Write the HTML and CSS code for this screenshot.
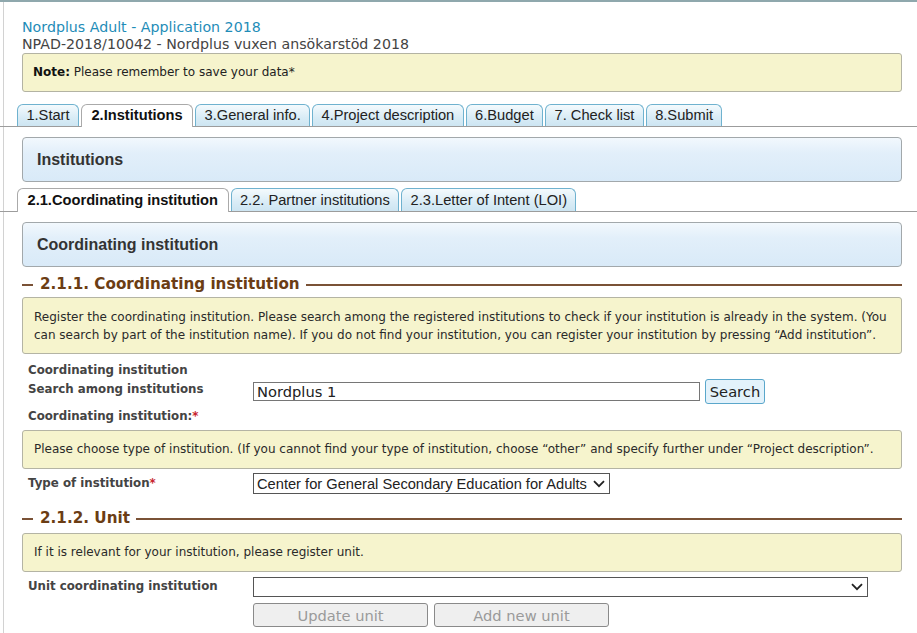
FILE: index.html
```html
<!DOCTYPE html>
<html lang="en">
<head>
<meta charset="utf-8">
<title>Nordplus Adult - Application 2018</title>
<link rel="stylesheet" href="styles.css">
</head>
<body>
<div class="frame">
  <div class="page">
    <div class="head">
      <div class="title">Nordplus Adult - Application 2018</div>
      <div class="subtitle">NPAD-2018/10042 - Nordplus vuxen ansökarstöd 2018</div>
      <div class="note"><b>Note:</b> Please remember to save your data*</div>
    </div>

    <div class="tabs main-tabs">
      <div class="tab">1.Start</div>
      <div class="tab active">2.Institutions</div>
      <div class="tab">3.General info.</div>
      <div class="tab">4.Project description</div>
      <div class="tab">6.Budget</div>
      <div class="tab">7. Check list</div>
      <div class="tab">8.Submit</div>
    </div>

    <div class="panel panel-first">Institutions</div>

    <div class="tabs sub-tabs">
      <div class="tab active">2.1.Coordinating institution</div>
      <div class="tab">2.2. Partner institutions</div>
      <div class="tab">2.3.Letter of Intent (LOI)</div>
    </div>

    <div class="panel">Coordinating institution</div>

    <div class="form">
      <div class="legend legend-first">2.1.1. Coordinating institution</div>
      <div class="info info-tall">Register the coordinating institution. Please search among the registered institutions to check if your institution is already in the system. (You can search by part of the institution name). If you do not find your institution, you can register your institution by pressing “Add institution”.</div>

      <div class="label label-top">Coordinating institution</div>
      <div class="row row-search">
        <div class="label">Search among institutions</div>
        <div class="controls">
          <input class="text-input" type="text" value="Nordplus 1">
          <button class="btn-search" type="button">Search</button>
        </div>
      </div>
      <div class="label label-coord">Coordinating institution:<span class="req">*</span></div>

      <div class="info info-short info-type">Please choose type of institution. (If you cannot find your type of institution, choose “other” and specify further under “Project description”.</div>

      <div class="row row-type">
        <div class="label">Type of institution<span class="req">*</span></div>
        <div class="controls">
          <div class="select-wrap select-type">
            <select class="select"><option>Center for General Secondary Education for Adults</option></select>
            <svg class="chev" width="12" height="8" viewBox="0 0 12 8"><path d="M1 1.2 L6 6.2 L11 1.2" fill="none" stroke="#222" stroke-width="1.8"/></svg>
          </div>
        </div>
      </div>

      <div class="legend legend-unit">2.1.2. Unit</div>
      <div class="info info-short info-unit">If it is relevant for your institution, please register unit.</div>

      <div class="row row-unit">
        <div class="label">Unit coordinating institution</div>
        <div class="controls">
          <div class="select-wrap select-unit">
            <select class="select"><option></option></select>
            <svg class="chev" width="12" height="8" viewBox="0 0 12 8"><path d="M1 1.2 L6 6.2 L11 1.2" fill="none" stroke="#222" stroke-width="1.8"/></svg>
          </div>
        </div>
      </div>
      <div class="row row-buttons">
        <div></div>
        <div class="controls">
          <button class="btn-disabled" type="button" disabled>Update unit</button>
          <button class="btn-disabled" type="button" disabled>Add new unit</button>
        </div>
      </div>
    </div>
  </div>
</div>
</body>
</html>
```

FILE: styles.css
```css
html, body {
  margin: 0;
  padding: 0;
  background: #ffffff;
}

body {
  font-family: "DejaVu Sans", Verdana, sans-serif;
  color: #222;
  overflow: hidden;
}

.frame {
  border-top: 2px solid #8fa8ad;
}

.page {
  margin-left: 3px;
  border-left: 1px solid #d2d2d2;
  min-height: 640px;
}

.head {
  padding: 17px 15px 0 18px;
}

.title {
  font-size: 14.2px;
  line-height: 17px;
  color: #1f8db8;
}

.subtitle {
  font-size: 14.2px;
  line-height: 17px;
  color: #444;
}

.note {
  height: 37px;
  line-height: 37px;
  border: 1px solid #b3b3a3;
  border-radius: 3px;
  background: #f6f4cd;
  padding: 0 10px;
  font-size: 12px;
  color: #222;
}

.note b {
  color: #111;
}

/* Tabs */
.tabs {
  display: flex;
  align-items: flex-end;
  gap: 2px;
  margin-left: -4px;
  padding-left: 17px;
  border-bottom: 1px solid #9c9c9c;
  font-family: "Liberation Sans", Arial, sans-serif;
  font-size: 14.667px;
}

.main-tabs {
  margin-top: 12px;
}

.sub-tabs {
  margin-top: 6px;
}

.tab {
  height: 21px;
  line-height: 21px;
  padding: 0 8.4px;
  border: 1px solid #6fb2cf;
  border-bottom: none;
  border-radius: 6px 6px 0 0;
  background: linear-gradient(#f4fafd, #d9ecf6 60%, #cde5f2);
  color: #222;
  white-space: nowrap;
}

.sub-tabs .tab {
  height: 22px;
  line-height: 22px;
}

.tab.active {
  position: relative;
  margin-bottom: -1px;
  height: 22px;
  padding: 0 9.5px;
  border-color: #aaaaaa;
  background: #ffffff;
  font-weight: bold;
  color: #111;
}

.sub-tabs .tab.active {
  height: 23px;
}

/* Panels */
.panel {
  margin: 10px 15px 0 18px;
  height: 43px;
  display: flex;
  align-items: center;
  padding-left: 14px;
  border: 1px solid #a2a8ab;
  border-radius: 4px;
  background: linear-gradient(#f2f8fd, #e2effa 35%, #d9eaf8);
  font-family: "Liberation Sans", Arial, sans-serif;
  font-weight: bold;
  font-size: 16px;
  color: #333;
}

/* Form */
.form {
  margin: 0 15px 0 18px;
}

.legend {
  display: flex;
  align-items: center;
  gap: 7px;
  font-size: 15.2px;
  line-height: 19px;
  font-weight: bold;
  color: #6b3d14;
}

.legend::before {
  content: "";
  width: 11px;
  border-top: 2px solid #7a5236;
}

.legend::after {
  content: "";
  flex: 1;
  border-top: 2px solid #7a5236;
  margin-left: -1px;
}

.legend-first {
  margin-top: 8px;
}

.legend-unit {
  margin-top: 15px;
}

.info {
  border: 1px solid #b4b4a4;
  border-radius: 3px;
  background: #f6f4cd;
  padding: 0 11px;
  font-size: 12px;
  line-height: 18px;
  color: #2a2a2a;
}

.info-tall {
  margin-top: 3px;
  padding-top: 10px;
  padding-bottom: 9px;
}

.info-short {
  padding-top: 9px;
  padding-bottom: 10px;
}

.info-type {
  margin-top: 5px;
}

.info-unit {
  margin-top: 5px;
}

.label {
  font-size: 11.8px;
  line-height: 18px;
  font-weight: bold;
  color: #444;
  padding-left: 6px;
}

.label-top {
  margin-top: 7px;
}

.label-coord {
  margin-top: 3px;
}

.req {
  color: #c8232c;
}

.row {
  display: grid;
  grid-template-columns: 231px 1fr;
  align-items: start;
}

.controls {
  display: flex;
  align-items: flex-start;
  gap: 5px;
}

.row-search .controls {
  align-items: center;
  height: 25px;
}

.row-search .label {
  padding-top: 1px;
}

.row-type {
  margin-top: 4px;
}

.row-type .label {
  padding-top: 1px;
}

.row-unit {
  margin-top: 5px;
}

.row-buttons {
  margin-top: 6px;
}

.row-buttons .controls {
  gap: 6px;
}

.text-input {
  box-sizing: border-box;
  width: 447px;
  height: 19px;
  margin: 0;
  padding: 0 3px;
  border: 1px solid #767676;
  font-family: "DejaVu Sans", Verdana, sans-serif;
  font-size: 14.667px;
  color: #222;
  background: #fff;
  outline: none;
}

.btn-search {
  box-sizing: border-box;
  width: 60px;
  height: 25px;
  margin: 0;
  padding: 0;
  border: 1px solid #5aa7cb;
  border-radius: 3px;
  background: #e3f2fb;
  font-family: "DejaVu Sans", Verdana, sans-serif;
  font-size: 14.667px;
  color: #222;
}

.select-wrap {
  position: relative;
}

.select {
  box-sizing: border-box;
  display: block;
  margin: 0;
  padding: 0 0 0 3px;
  border: 1px solid #555;
  border-radius: 0;
  background: #fff;
  -webkit-appearance: none;
  appearance: none;
  font-family: "Liberation Sans", Arial, sans-serif;
  font-size: 14.667px;
  color: #222;
  outline: none;
}

.select-type .select {
  width: 357px;
  height: 21px;
}

.select-unit .select {
  width: 615px;
  height: 20px;
}

.chev {
  position: absolute;
  right: 5px;
  top: 7px;
  pointer-events: none;
}

.select-unit .chev {
  top: 6px;
}

.btn-disabled {
  box-sizing: border-box;
  width: 175px;
  height: 24px;
  margin: 0;
  padding: 0;
  border: 1px solid #8a8a8a;
  border-radius: 3px;
  background: #efefef;
  font-family: "DejaVu Sans", Verdana, sans-serif;
  font-size: 14.667px;
  color: #9a9a9a;
}
```
